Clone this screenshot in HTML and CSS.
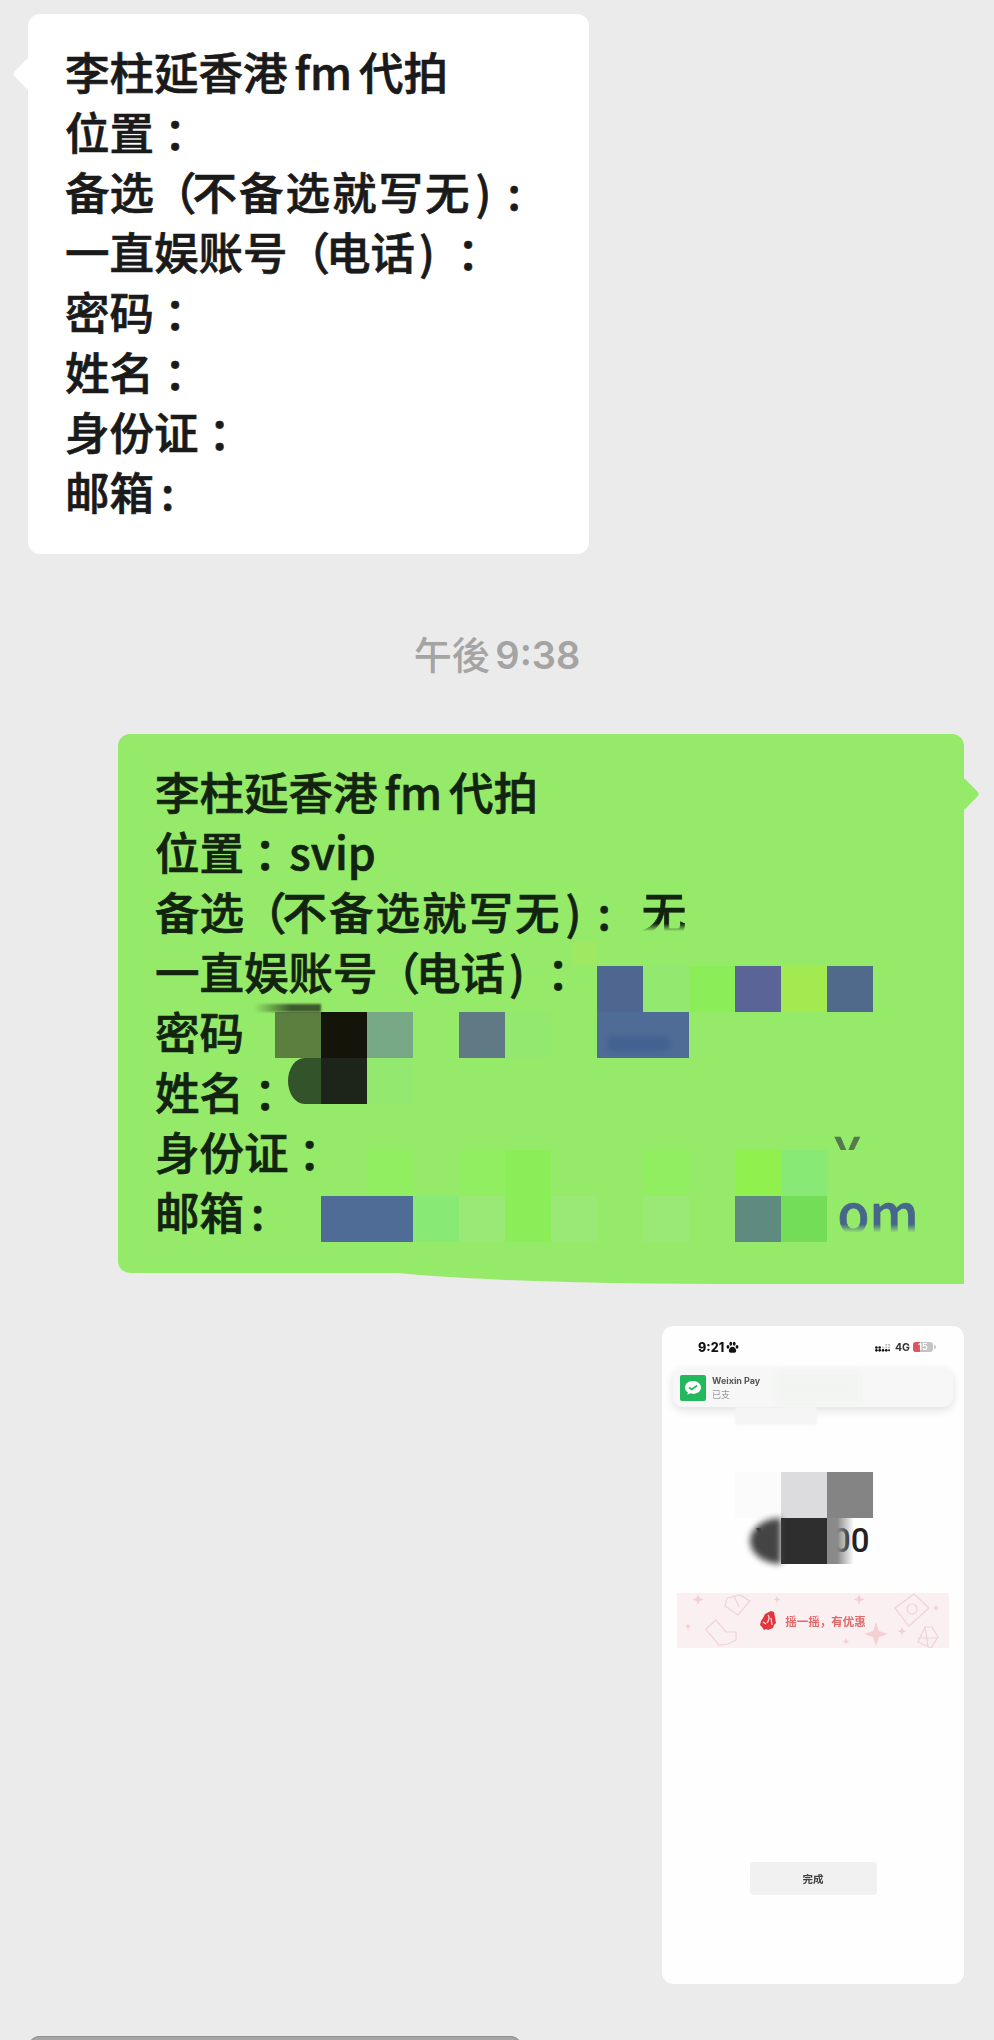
FILE: index.html
```html
<!DOCTYPE html>
<html lang="zh-CN">
	<head>
		<meta charset="UTF-8" />
		<meta name="viewport" content="width=device-width, initial-scale=1.0" />
		<title>Chat</title>
		<link rel="stylesheet" href="styles.css">
	</head>
	<body>
		<div id="chat">
			<div class="bubble them">
				<div class="line">李柱延香港 fm 代拍</div>
				<div class="line">位置<span class="cc">：</span></div>
				<div class="line">备选<span class="op">（</span><span class="wide">不备选就写无</span><span class="cp">)</span><span class="nc far">:</span></div>
				<div class="line">一直娱账号<span class="op">（</span>电话<span class="cp">)</span><span class="cc lc">：</span></div>
				<div class="line">密码<span class="cc">：</span></div>
				<div class="line">姓名<span class="cc">：</span></div>
				<div class="line">身份证<span class="cc">：</span></div>
				<div class="line">邮箱<span class="nc">:</span></div>
			</div>

			<div class="time"><span class="time-cjk">午後</span> 9:38</div>

			<div class="bubble me">
				<div class="line">李柱延香港 fm 代拍</div>
				<div class="line">位置<span class="cc">：</span>svip</div>
				<div class="line">备选<span class="op">（</span><span class="wide">不备选就写无</span><span class="cp">)</span><span class="nc far">:</span><span class="wu">无</span></div>
				<div class="line">一直娱账号<span class="op">（</span>电话<span class="cp">)</span><span class="cc lc">：</span></div>
				<div class="line">密码</div>
				<div class="line">姓名<span class="cc">：</span></div>
				<div class="line">身份证<span class="cc">：</span><span class="left-y">Y</span></div>
				<div class="line">邮箱<span class="nc">:</span><span class="left-com">com</span></div>

				<!-- pixelated bits over the private values -->
				<div class="mosaic">
					<i class="c7 r0 lime-faint"></i>
					<i class="c8 r1 blue"></i>
					<i class="c9 r1 g-soft"></i>
					<i class="c10 r1 g-bright"></i>
					<i class="c11 r1 indigo"></i>
					<i class="c12 r1 lime"></i>
					<i class="c13 r1 slate"></i>

					<i class="c1 r2 moss"></i>
					<i class="c2 r2 black"></i>
					<i class="c3 r2 sage"></i>
					<i class="c5 r2 steel"></i>
					<i class="c6 r2 g-soft"></i>
					<i class="c8 r2 blue2"></i>
					<i class="c9 r2 blue2"></i>

					<i class="c1 r3 forest blob"></i>
					<i class="c2 r3 charcoal"></i>
					<i class="c3 r3 g-soft"></i>

					<i class="c3 r5 g-faint"></i>
					<i class="c5 r5 g-faint"></i>
					<i class="c6 r5 g-bright"></i>
					<i class="c9 r5 g-faint"></i>
					<i class="c11 r5 lime2"></i>
					<i class="c12 r5 g-mint"></i>
					<i class="c13 r5 bubble-green"></i>

					<i class="c2 r6 blue2"></i>
					<i class="c3 r6 blue2"></i>
					<i class="c4 r6 g-mint"></i>
					<i class="c5 r6 g-pale"></i>
					<i class="c6 r6 g-bright"></i>
					<i class="c7 r6 g-pale"></i>
					<i class="c9 r6 g-pale"></i>
					<i class="c11 r6 teal"></i>
					<i class="c12 r6 g-deep"></i>
					<i class="c13 r6 bubble-green sliver"></i>
				</div>
				<div class="smear-top"></div>
				<div class="smear-digits"></div>
				<div class="smudge"></div>
			</div>

			<div class="shot">
				<div class="status">
					<span class="clock">9:21</span>
					<svg class="paw" viewBox="0 0 12 12"><ellipse cx="1.800" cy="5.400" rx="1.300" ry="1.700"/><ellipse cx="4.400" cy="2.600" rx="1.300" ry="1.800"/><ellipse cx="7.600" cy="2.600" rx="1.300" ry="1.800"/><ellipse cx="10.200" cy="5.400" rx="1.300" ry="1.700"/><path d="M6 5.200c1.800 0 3.400 2 3.400 3.800 0 1.800-1.600 1.800-3.400 1.800s-3.400 0-3.400-1.800C2.600 7.200 4.200 5.200 6 5.200z"/></svg>
					<span class="status-right">
						<svg class="signal" viewBox="0 0 16 9"><g fill="#111"><circle cx="1.500" cy="4.500" r="1.400"/><circle cx="1.500" cy="7.500" r="1.400"/><circle cx="5" cy="4.500" r="1.400"/><circle cx="5" cy="7.500" r="1.400"/><circle cx="8.500" cy="7.500" r="1.400"/><circle cx="12" cy="7.500" r="1.400"/><circle cx="15" cy="7.500" r="1.100"/></g><g fill="#bbb"><circle cx="8.500" cy="4.500" r="1.100"/><circle cx="12" cy="1.500" r="1.100"/><circle cx="12" cy="4.500" r="1.100"/><circle cx="15" cy="1.500" r="1.100"/><circle cx="15" cy="4.500" r="1.100"/></g></svg>
						<span class="net">4G</span>
						<span class="batt"><span class="batt-fill"></span><span class="batt-num">15</span></span>
						<span class="batt-nub"></span>
					</span>
				</div>

				<div class="notif">
					<svg class="wx" viewBox="0 0 26 26"><rect width="26" height="26" rx="2" fill="#23b85b"/><path d="M13 6c-4.700 0-8 2.900-8 6.400 0 2 1.100 3.700 2.900 4.900l-.6 2.400 2.800-1.400c.9.300 1.900.4 2.900.4 4.700 0 8-2.900 8-6.300S17.700 6 13 6z" fill="#fff"/><path d="M9 12.500l2.800 2 5.400-4" fill="none" stroke="#23b85b" stroke-width="1.600"/></svg>
					<div class="notif-text">
						<div class="notif-title">Weixin Pay</div>
						<div class="notif-sub">已支</div>
					</div>
				</div>

				<div class="amount">¥<span class="amount-end">00</span></div>

				<div class="promo">
					<svg class="promo-bg" viewBox="0 0 270 55">
						<g fill="none" stroke="#efd3d6" stroke-width="1.200">
							<path d="M49 5l13-3 10 6-12 14-13-9z"/><path d="M56 3l5 11"/>
							<path d="M28 36l10-9 10 12h10v8l-8 4-9 1-12-14z"/>
							<path d="M217 15l19-14 15 14-20 18z"/><circle cx="234" cy="16" r="5"/>
							<path d="M240 49l7-15h7l6 10-7 11z"/><path d="M240 45h20M247 34l3 19"/>
						</g>
						<g fill="#f4cfd3">
							<path d="M20 1l1.500 4 4 1.500-4 1.500-1.500 4-1.500-4-4-1.500 4-1.500z"/>
							<path d="M10 30l1 2.500 2.500 1-2.500 1-1 2.500-1-2.500-2.500-1 2.500-1z"/>
							<path d="M99 3l1 2.500 2.500 1-2.500 1-1 2.500-1-2.500-2.500-1 2.500-1z"/>
							<path d="M181 1l1.500 4 4 1.500-4 1.500-1.500 4-1.500-4-4-1.500 4-1.500z"/>
							<path d="M198 29l3 9 9 3-9 3-3 9-3-9-9-3 9-3z"/>
							<path d="M224 34l1.200 3 3 1.200-3 1.200-1.200 3-1.200-3-3-1.200 3-1.200z"/>
							<path d="M168 45l1 2.500 2.500 1-2.500 1-1 2.500-1-2.500-2.500-1 2.500-1z"/>
							<path d="M258 12l1 2 2 1-2 1-1 2-1-2-2-1 2-1z"/>
						</g>
					</svg>
					<svg class="promo-icon" viewBox="0 0 16 20"><path d="M5 3l6-3 3 1 1 5 1 6-2 2-1 3-5 2-2-1-2 1-2-3-2-2 1-4 2-3z" fill="#e0363d"/><path d="M8 4c2 2 1 5-1 8M11 7l1 7M3 11l3 2" stroke="#f9d6d8" stroke-width="1.300" fill="none"/></svg>
					<span class="promo-text">摇一摇，有优惠</span>
				</div>

				<div class="done">完成</div>

				<div class="shot-mosaic">
					<i class="sm-a"></i>
					<i class="sm-b"></i>
					<i class="sm-c"></i>
					<div class="sm-blob"></div>
					<i class="sm-d"></i>
					<i class="sm-e"></i>
				</div>
				<div class="notif-cover"></div>
				<div class="notif-cover-wide"></div>
			</div>

			<div class="bubble-next"></div>
		</div>
	</body>
</html>
```

FILE: styles.css
```css
html {
	background: #ebebeb;
}
body {
	margin: 0;
	height: 2040px;
	overflow: hidden;
	font-family: "Noto Sans CJK SC", "Noto Sans", sans-serif;
}
#chat {
	display: flex;
	flex-direction: column;
	padding-top: 14px;
}

/* bubbles */
.bubble {
	position: relative;
	box-sizing: border-box;
	padding: 27px 0 0 37px;
	border-radius: 12px;
	color: #1a1a1a;
	font-size: 44.5px;
	font-weight: 500;
	word-spacing: -3px;
	-webkit-text-stroke: 0.7px currentColor;
}
.bubble::before {
	content: "";
	position: absolute;
	top: 48px;
	width: 24px;
	height: 24px;
	border-radius: 4px;
	background: inherit;
	transform: rotate(45deg);
}
.them {
	width: 561px;
	height: 540px;
	margin-left: 28px;
	background: #fff;
}
.them::before {
	left: -11px;
}
.me {
	width: 846px;
	height: 539px;
	margin-left: 118px;
	background: #95ea6a;
	border-bottom-right-radius: 0;
	color: #12240f;
}
.me::before {
	right: -11px;
}
.line {
	height: 60px;
	line-height: 60px;
	white-space: nowrap;
}

/* punctuation, the source has it narrower than the font does */
.cc {
	margin: 0 13px 0 10px;
	font-feature-settings: "palt";
}
.lc {
	margin-left: 22px;
}
.op {
	margin: 0 -4px 0 -2px;
}
.cp {
	margin-left: 4px;
}
.nc {
	margin-left: 7px;
}
.far {
	margin-left: 16px;
}
.wide {
	letter-spacing: 2px;
}
.wu {
	margin-left: 31px;
	mask-image: linear-gradient(#000 70%, transparent 82%);
	-webkit-mask-image: linear-gradient(#000 70%, transparent 82%);
}
.left-y {
	position: absolute;
	left: 717px;
	color: #55784f;
	filter: blur(0.6px);
}
.left-com {
	position: absolute;
	left: 694px;
	color: #46678a;
	font-size: 52px;
	mask-image: linear-gradient(#000 72%, transparent 86%);
	-webkit-mask-image: linear-gradient(#000 72%, transparent 86%);
	filter: blur(0.6px);
}

.time {
	height: 50px;
	margin: 74px 0 56px;
	line-height: 50px;
	text-align: center;
	color: #a4a4a4;
	font-family: Inter, sans-serif;
	font-size: 38px;
	font-weight: 600;
	word-spacing: -4px;
}
.time-cjk {
	font-family: "Noto Sans CJK TC", sans-serif;
	font-weight: 500;
}

/* mosaic over the green bubble, 46px blocks */
.mosaic {
	position: absolute;
	left: 157px;
	top: 186px;
	display: grid;
	grid-template-columns: repeat(13, 46px);
	grid-template-rows: repeat(7, 46px);
}
.r0 { grid-row: 1; }
.r1 { grid-row: 2; }
.r2 { grid-row: 3; }
.r3 { grid-row: 4; }
.r5 { grid-row: 6; }
.r6 { grid-row: 7; }
.c1 { grid-column: 1; }
.c2 { grid-column: 2; }
.c3 { grid-column: 3; }
.c4 { grid-column: 4; }
.c5 { grid-column: 5; }
.c6 { grid-column: 6; }
.c7 { grid-column: 7; }
.c8 { grid-column: 8; }
.c9 { grid-column: 9; }
.c10 { grid-column: 10; }
.c11 { grid-column: 11; }
.c12 { grid-column: 12; }
.c13 { grid-column: 13; }

.blue { background: #4f6790; }
.blue2 { background: #4e6c95; }
.indigo { background: #5b6497; }
.slate { background: #4f6a8a; }
.steel { background: #5f7a85; }
.teal { background: #5f8a80; }
.sage { background: #78a986; }
.moss { background: #5c7f40; }
.forest { background: #33532a; }
.black { background: #15140a; }
.charcoal { background: #1d2419; }
.lime { background: #a2ea50; }
.lime2 { background: #90f04e; }
.lime-faint { background: #9ee862; }
.g-soft { background: #93e96f; }
.g-bright { background: #8bee58; }
.g-faint { background: #90ee60; }
.g-mint { background: #88ea74; }
.g-pale { background: #9ae876; }
.g-deep { background: #74dd58; }
.bubble-green { background: #95ea6a; }
.blob {
	margin-left: 13px;
	border-radius: 50% 0 0 50%;
}
.lime-faint {
	align-self: end;
	justify-self: end;
	width: 24px;
	height: 24px;
}
.sliver {
	width: 11px;
}

/* the smeared paint around the mosaic */
.smear-top {
	position: absolute;
	left: 136px;
	top: 270px;
	width: 67px;
	height: 8px;
	background: linear-gradient(90deg, transparent, #3e5a2c 55%);
	filter: blur(1px);
}
.smear-digits {
	position: absolute;
	left: 489px;
	top: 302px;
	width: 63px;
	height: 15px;
	border-radius: 6px;
	background: #436292;
	filter: blur(2px);
}
.smudge {
	position: absolute;
	left: 232px;
	right: 0;
	bottom: -11px;
	height: 22px;
	border-radius: 0 0 0 60% / 0 0 0 100%;
	background: #95ea6a;
}

/* screenshot message */
.shot {
	position: relative;
	box-sizing: border-box;
	display: flex;
	flex-direction: column;
	width: 302px;
	height: 658px;
	margin: 53px 0 0 662px;
	padding: 12px 11px 0;
	border-radius: 11px;
	background: #fefefe;
	box-shadow: 0 0 1px #ddd;
}
.status {
	display: flex;
	align-items: center;
	height: 18px;
	padding: 0 17px 0 25px;
	filter: blur(0.3px);
}
.clock {
	color: #111;
	font-family: Inter, sans-serif;
	font-size: 12.5px;
	font-weight: 800;
}
.paw {
	width: 13px;
	height: 13px;
	margin-left: 2px;
	fill: #111;
}
.status-right {
	display: flex;
	align-items: center;
	margin-left: auto;
}
.signal {
	width: 15px;
	height: 9px;
}
.net {
	margin-left: 5px;
	color: #333;
	font-family: Inter, sans-serif;
	font-size: 10.5px;
	font-weight: 700;
}
.batt {
	position: relative;
	width: 20px;
	height: 10px;
	margin-left: 3px;
	border-radius: 3px;
	background: #c4c4c4;
	overflow: hidden;
}
.batt-fill {
	display: block;
	width: 7px;
	height: 10px;
	background: #d9575d;
}
.batt-num {
	position: absolute;
	left: 5px;
	top: 0;
	color: #fff;
	font-family: Inter, sans-serif;
	font-size: 9px;
	font-weight: 700;
	line-height: 10px;
}
.batt-nub {
	width: 2px;
	height: 4px;
	margin-left: 1px;
	border-radius: 0 2px 2px 0;
	background: #c4c4c4;
}
.notif {
	display: flex;
	align-items: center;
	height: 39px;
	margin-top: 12px;
	padding-left: 7px;
	border-radius: 10px;
	background: #f7f7f7;
	box-shadow: 0 3px 10px rgba(0, 0, 0, 0.12);
	filter: blur(0.3px);
}
.wx {
	width: 26px;
	height: 26px;
}
.notif-text {
	margin-left: 6px;
	font-size: 9px;
	line-height: 14px;
}
.notif-title {
	color: #555;
	font-family: Inter, sans-serif;
	font-weight: 700;
}
.notif-sub {
	color: #999;
}
.amount {
	position: relative;
	height: 46px;
	margin-top: 111px;
	padding-left: 83px;
	color: #222;
	font-family: Roboto, sans-serif;
	font-size: 33px;
	font-weight: 500;
	line-height: 46px;
}
.amount-end {
	position: absolute;
	left: 159px;
}
.promo {
	position: relative;
	display: flex;
	align-items: center;
	justify-content: center;
	height: 55px;
	margin: 29px 4px 0;
	background: #fbf0f1;
	filter: blur(0.3px);
}
.promo-bg {
	position: absolute;
	left: 0;
	top: 0;
	width: 100%;
	height: 100%;
}
.promo-icon {
	position: relative;
	width: 16px;
	height: 20px;
}
.promo-text {
	position: relative;
	margin-left: 9px;
	color: #e0696c;
	font-size: 11.5px;
	font-weight: 700;
}
.done {
	align-self: center;
	width: 127px;
	height: 33px;
	margin-top: 214px;
	border-radius: 4px;
	background: #f1f1f1;
	color: #444;
	font-size: 10.5px;
	font-weight: 700;
	line-height: 33px;
	text-align: center;
	filter: blur(0.3px);
}

/* mosaic over the amount */
.shot-mosaic {
	position: absolute;
	left: 73px;
	top: 146px;
	display: grid;
	grid-template-columns: repeat(3, 46px);
	grid-template-rows: repeat(2, 46px);
}
.sm-a { background: #fbfbfb; }
.sm-b { background: #dcdcde; }
.sm-c { background: #848484; }
.sm-d { background: #2e2e2e; }
.sm-e { background: linear-gradient(90deg, #8a8a8a 22%, transparent 58%); }
.sm-blob {
	box-sizing: border-box;
	width: 31px;
	height: 46px;
	margin-left: 15px;
	border-radius: 100% 0 0 100% / 50% 0 0 50%;
	background: #444;
	filter: blur(3px);
}
.notif-cover {
	position: absolute;
	left: 73px;
	top: 81px;
	width: 82px;
	height: 18px;
	background: #f5f5f5;
	filter: blur(1px);
}
.notif-cover-wide {
	position: absolute;
	left: 113px;
	top: 46px;
	width: 85px;
	height: 32px;
	background: #f2f4f2;
	filter: blur(3px);
}

.bubble-next {
	flex: none;
	width: 494px;
	height: 30px;
	margin: 52px 0 0 28px;
	border-radius: 12px;
	background: #a6a6a6;
	box-shadow: inset 0 1px 0 #8f8f8f;
}
```
